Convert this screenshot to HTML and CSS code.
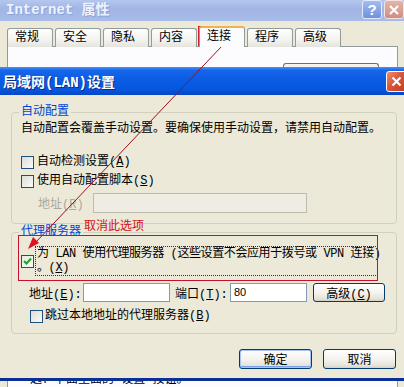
FILE: index.html
```html
<!DOCTYPE html>
<html lang="zh-CN">
<head>
  <meta charset="UTF-8" />
  <meta name="viewport" content="width=device-width, initial-scale=1.0" />
  <title>局域网(LAN)设置</title>
  <link rel="stylesheet" href="styles.css">
</head>
<body>
<div class="screen">

  <!-- window behind: Internet 属性 -->
  <div class="owner">
    <div class="owner-title">
      <span class="owner-caption">Internet 属性</span>
      <span class="cap-btn help">?</span>
      <span class="cap-btn close-dim">
        <svg width="12" height="12" viewBox="0 0 12 12"><path d="M2 2 L10 10 M10 2 L2 10" stroke="#fff" stroke-width="2.2"/></svg>
      </span>
    </div>
    <div class="owner-body">
      <div class="tabs">
        <span class="tab">常规</span>
        <span class="tab">安全</span>
        <span class="tab">隐私</span>
        <span class="tab">内容</span>
        <span class="tab active">连接</span>
        <span class="tab">程序</span>
        <span class="tab">高级</span>
      </div>
      <div class="tab-panel">
        <div class="panel-frame"></div>
      </div>
    </div>
  </div>

  <!-- LAN dialog -->
  <div class="dialog">
    <div class="dlg-title">
      <span class="dlg-caption">局域网(LAN)设置</span>
      <span class="cap-btn close">
        <svg width="13" height="13" viewBox="0 0 13 13"><path d="M2.5 2.5 L10.5 10.5 M10.5 2.5 L2.5 10.5" stroke="#fff" stroke-width="2.2"/></svg>
      </span>
    </div>

    <div class="dlg-body">
      <section class="group">
        <span class="group-title">自动配置</span>
        <p class="desc">自动配置会覆盖手动设置。要确保使用手动设置，请禁用自动配置。</p>
        <div class="check first"><span class="box"></span><span>自动检测设置(<u>A</u>)</span></div>
        <div class="check"><span class="box"></span><span>使用自动配置脚本(<u>S</u>)</span></div>
        <div class="field-row disabled">
          <span class="lbl-addr">地址(<u>R</u>)</span>
          <span class="input wide"></span>
        </div>
      </section>

      <section class="group proxy">
        <span class="group-title">代理服务器</span>
        <div class="check proxy-use">
          <span class="box checked">
            <svg width="11" height="11" viewBox="0 0 11 11"><path d="M2 5 L4.5 7.5 L9 2.5" fill="none" stroke="#21a121" stroke-width="2"/></svg>
          </span>
          <span class="focus">为 LAN 使用代理服务器 (这些设置不会应用于拨号或 VPN 连接)<br>。(<u>X</u>)</span>
        </div>
        <div class="field-row server">
          <span class="lbl-server">地址(<u>E</u>):</span>
          <span class="input host"></span>
          <span class="lbl-port">端口(<u>T</u>):</span>
          <span class="input port">80</span>
          <button class="btn adv">高级(<u>C</u>)</button>
        </div>
        <div class="check bypass"><span class="box"></span><span>跳过本地地址的代理服务器(<u>B</u>)</span></div>
      </section>

      <div class="actions">
        <button class="btn default">确定</button>
        <button class="btn">取消</button>
      </div>
    </div>
  </div>

  <!-- window behind, lower part -->
  <div class="under">
    <div class="under-panel"><span class="under-text">选：下面里面的"设置"按钮。</span></div>
  </div>

  <!-- red annotations drawn over the screenshot -->
  <svg class="marks" width="404" height="387" viewBox="0 0 404 387">
    <rect x="198.5" y="26.5" width="44" height="19" fill="none" stroke="#d21f2a" stroke-width="1"/>
    <line x1="222" y1="46" x2="36" y2="242" stroke="#9c1020" stroke-width="1"/>
    <polygon points="28,249 39,243 33,237" fill="#e01020"/>
    <rect x="18.5" y="235.5" width="359" height="45" fill="none" stroke="#c8102a" stroke-width="1"/>
  </svg>
  <span class="note">取消此选项</span>
</div>
</body>
</html>
```

FILE: styles.css
```css
* {
  box-sizing: border-box;
}

body {
  margin: 0;
  font-family: "Liberation Mono", "Noto Sans CJK SC", monospace;
  font-size: 12px;
  color: #000;
  background: #ece9d8;
}

.screen {
  position: relative;
  width: 404px;
  height: 387px;
  overflow: hidden;
  background: #ece9d8;
}

/* ---- background window ---- */

.owner-title {
  display: flex;
  align-items: flex-start;
  height: 21px;
  background: linear-gradient(#b5c7ee, #a1b6e5 40%, #a8bbe8);
}

.owner-caption {
  flex: 1;
  padding-left: 6px;
  line-height: 20px;
  font-size: 14px;
  font-weight: bold;
  color: #eef3fd;
  text-shadow: 1px 1px 0 #8aa1d6;
}

.cap-btn {
  display: flex;
  align-items: center;
  justify-content: center;
  border-radius: 3px;
}

.help {
  width: 20px;
  height: 19px;
  margin-right: 2px;
  border: 1px solid #e4ebfa;
  background: linear-gradient(#a3bcef, #6f92dc);
  color: #fff;
  font-family: "Liberation Sans", sans-serif;
  font-weight: bold;
  font-size: 15px;
}

.close-dim {
  width: 20px;
  height: 19px;
  border: 1px solid #f1e3df;
  background: linear-gradient(#e4b4aa, #cf8e84);
}

.owner-body {
  height: 46px;
  padding: 5px 6px 0 7px;
}

.tabs {
  display: flex;
  align-items: flex-end;
  gap: 2px;
  height: 21px;
  position: relative;
  z-index: 1;
}

.tab {
  width: 46px;
  height: 19px;
  padding-left: 7px;
  line-height: 18px;
  border: 1px solid #919b9c;
  border-bottom: none;
  border-radius: 3px 3px 0 0;
  background: linear-gradient(#fefefe, #f4f3ee 60%, #e4e3dc);
}

.tab.active {
  height: 21px;
  line-height: 19px;
  border-top: 2px solid #f0b24a;
  background: #fcfcfe;
}

.tab-panel {
  height: 21px;
  margin-top: -1px;
  border: 1px solid #919b9c;
  border-bottom: none;
  background: #fcfcfe;
}

.panel-frame {
  width: 96px;
  height: 6px;
  margin: 16px 0 0 275px;
  border: 1px solid #6f6f6f;
  border-bottom: none;
  border-radius: 3px 3px 0 0;
  background: #f4f3ee;
}

/* ---- LAN dialog ---- */

.dlg-title {
  display: flex;
  align-items: center;
  height: 28px;
  overflow: hidden;
  background: linear-gradient(#4a90f4 0, #1666ea 12%, #0b5ce4 45%, #0656de 80%, #0447c8 100%);
}

.dlg-caption {
  flex: 1;
  padding-left: 3px;
  font-size: 14px;
  font-weight: bold;
  color: #fff;
  text-shadow: 1px 1px 0 #0a2a8c;
}

.close {
  width: 21px;
  height: 21px;
  margin-right: -3px;
  border: 1px solid #fff;
  background: linear-gradient(135deg, #ec8d72, #d9563a 45%, #c43c1c);
}

.dlg-body {
  height: 283px;
  overflow: hidden;
  padding: 17px 7px 0 11px;
  background: #ece9d8;
}

.group {
  padding: 0 8px 10px 9px;
  border: 1px solid #d0d0bf;
  border-radius: 4px;
}

.group-title {
  display: table;
  margin: -7px 0 0 -2px;
  padding: 0 2px;
  line-height: 13px;
  color: #0046d5;
  background: #ece9d8;
}

.desc {
  margin: 3px 0 0;
  line-height: 14px;
  white-space: nowrap;
}

.check {
  display: flex;
  align-items: center;
  gap: 3px;
  height: 14px;
  margin-top: 5px;
  line-height: 14px;
  white-space: nowrap;
}

.check.first {
  margin-top: 19px;
}

.box {
  display: flex;
  align-items: center;
  justify-content: center;
  flex-shrink: 0;
  width: 13px;
  height: 13px;
  border: 1px solid #1c5180;
  background: linear-gradient(135deg, #dcdcd7, #fbfbf9);
}

.box.checked {
  background: linear-gradient(135deg, #e2eee0, #fbfbf9);
}

.field-row {
  display: flex;
  align-items: center;
  white-space: nowrap;
}

.field-row.disabled {
  height: 20px;
  margin-top: 5px;
}

.lbl-addr {
  width: 72px;
  padding-left: 17px;
  color: #aca899;
}

.input {
  height: 20px;
  border: 1px solid #7f9db9;
  background: #fff;
}

.input.wide {
  width: 214px;
  border-color: #bdbbae;
  background: #efede3;
}

.group.proxy {
  margin-top: 8px;
}

.proxy-use {
  height: auto;
  margin-top: 7px;
  gap: 1px;
}

.focus {
  width: 343px;
  padding-left: 1px;
  border: 1px dotted #333;
  line-height: 14px;
  letter-spacing: -0.4px;
}

.field-row.server {
  height: 19px;
  margin-top: 7px;
}

.lbl-server {
  width: 62px;
  padding-left: 8px;
}

.input.host {
  width: 87px;
  height: 19px;
}

.lbl-port {
  width: 60px;
  padding-left: 5px;
}

.input.port {
  width: 77px;
  height: 19px;
  padding-left: 3px;
  line-height: 17px;
  font-family: "Liberation Sans", sans-serif;
  font-size: 11px;
}

.btn {
  width: 73px;
  height: 20px;
  padding: 0;
  border: 1px solid #003c74;
  border-radius: 3px;
  background: linear-gradient(#fefefe, #f4f3ee 50%, #e6e4da 85%, #d6d0c5);
  font-family: inherit;
  font-size: 12px;
  color: #000;
}

.btn.adv {
  width: 72px;
  height: 19px;
  margin-left: 6px;
}

.btn.default {
  box-shadow: inset 0 0 0 1px #a8c4f4, inset 0 -1px 0 1px #7aa0ea;
}

.check.bypass {
  margin-top: 7px;
  padding-left: 9px;
  gap: 2px;
}

.actions {
  display: flex;
  justify-content: flex-end;
  gap: 11px;
  margin-top: 15px;
  padding-right: 1px;
}

/* ---- lower part of the window behind ---- */

.under {
  height: 9px;
  border-top: 3px solid #0c2f95;
  padding: 0 6px 0 7px;
}

.under-panel {
  height: 6px;
  overflow: hidden;
  border-left: 1px solid #919b9c;
  border-right: 1px solid #919b9c;
  background: #fcfcfe;
}

.under-text {
  display: block;
  margin: -8px 0 0 22px;
  line-height: 14px;
  white-space: nowrap;
}

/* ---- annotations ---- */

.marks {
  position: absolute;
  top: 0;
  left: 0;
  pointer-events: none;
}

.note {
  position: absolute;
  left: 84px;
  top: 220px;
  line-height: 14px;
  color: #d0101a;
}
```
